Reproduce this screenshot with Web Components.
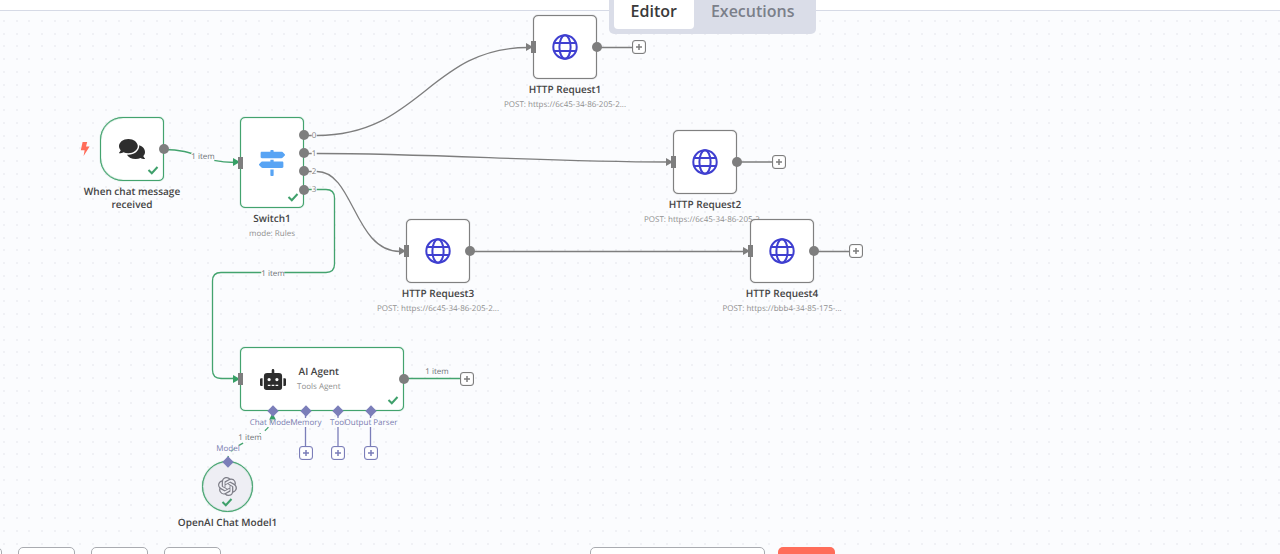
<!DOCTYPE html>
<html lang="en">
<head>
<meta charset="utf-8">
<meta name="viewport" content="width=device-width, initial-scale=1">
<title>Workflow editor</title>
<style>
  html, body { margin: 0; height: 100%; }
  body { font-family: "Open Sans", "Noto Sans", sans-serif; text-rendering: geometricPrecision; overflow: hidden; background: #fbfcfe; }
</style>
</head>
<body>
<wf-app></wf-app>

<script>
const ICONS = {
  comments: '<svg viewBox="0 0 576 512" width="26" height="24" fill="#2d2d2d"><path d="M416 192c0-88.4-93.1-160-208-160S0 103.6 0 192c0 34.3 14.1 65.9 38 92-13.4 30.2-35.5 54.2-35.8 54.5-2.2 2.3-2.8 5.7-1.5 8.7S4.8 352 8 352c36.6 0 66.9-12.3 88.7-25 32.2 15.7 70.3 25 111.3 25 114.9 0 208-71.6 208-160zm122 220c23.9-26 38-57.7 38-92 0-66.9-53.5-124.2-129.3-148.1.9 6.6 1.3 13.3 1.3 20.1 0 105.9-107.7 192-240 192-10.8 0-21.3-.8-31.7-1.9C207.8 439.6 281.8 480 368 480c41 0 79.1-9.2 111.3-25 21.8 12.7 52.1 25 88.7 25 3.2 0 6.1-1.9 7.3-4.8 1.3-2.9.7-6.3-1.5-8.7-.3-.3-22.4-24.2-35.8-54.5z"/></svg>',
  signs: '<svg viewBox="0 0 512 512" width="26" height="26" fill="#58a4f4"><path d="M507.31 84.69L464 41.37c-6-6-14.14-9.37-22.63-9.37H288V16c0-8.84-7.16-16-16-16h-32c-8.84 0-16 7.16-16 16v16H56c-13.25 0-24 10.75-24 24v80c0 13.25 10.75 24 24 24h385.37c8.49 0 16.62-3.37 22.63-9.37l43.31-43.31c6.25-6.26 6.25-16.38 0-22.63zM224 496c0 8.84 7.16 16 16 16h32c8.84 0 16-7.16 16-16V384h-64v112zm232-272H288v-32h-64v32H70.63c-8.49 0-16.62 3.37-22.63 9.37L4.69 276.69c-6.25 6.25-6.25 16.38 0 22.63L48 342.63c6 6 14.14 9.37 22.63 9.37H456c13.25 0 24-10.75 24-24v-80c0-13.25-10.75-24-24-24z"/></svg>',
  globe: '<svg viewBox="0 0 26 26" width="26" height="26" fill="none" stroke="#3f3fd0" stroke-width="2"><circle cx="13" cy="13" r="11.7"/><ellipse cx="13" cy="13" rx="5.6" ry="11.7"/><path d="M2 9h22M2 17h22"/></svg>',
  robot: '<svg viewBox="0 0 640 512" width="26" height="21" fill="#2d2d2d"><path d="M32,224H64V416H32A32,32,0,0,1,0,384V256A32,32,0,0,1,32,224Zm512-48V448a64,64,0,0,1-64,64H160a64,64,0,0,1-64-64V176a80,80,0,0,1,80-80H288V32a32,32,0,0,1,64,0V96H464A80,80,0,0,1,544,176ZM264,256a40,40,0,1,0-40,40A40,40,0,0,0,264,256Zm-8,128H192v32h64Zm96,0H288v32h64ZM456,256a40,40,0,1,0-40,40A40,40,0,0,0,456,256Zm-8,128H384v32h64ZM640,256V384a32,32,0,0,1-32,32H576V224h32A32,32,0,0,1,640,256Z"/></svg>',
  openai: '<svg viewBox="0 0 24 24" width="19" height="19" fill="#7d7d87"><path d="M22.2819 9.8211a5.9847 5.9847 0 0 0-.5157-4.9108 6.0462 6.0462 0 0 0-6.5098-2.9A6.0651 6.0651 0 0 0 4.9807 4.1818a5.9847 5.9847 0 0 0-3.9977 2.9 6.0462 6.0462 0 0 0 .7427 7.0966 5.98 5.98 0 0 0 .511 4.9107 6.051 6.051 0 0 0 6.5146 2.9001A5.9847 5.9847 0 0 0 13.2599 24a6.0557 6.0557 0 0 0 5.7718-4.2058 5.9894 5.9894 0 0 0 3.9977-2.9001 6.0557 6.0557 0 0 0-.7475-7.0729zm-9.022 12.6081a4.4755 4.4755 0 0 1-2.8764-1.0408l.1419-.0804 4.7783-2.7582a.7948.7948 0 0 0 .3927-.6813v-6.7369l2.02 1.1686a.071.071 0 0 1 .038.052v5.5826a4.504 4.504 0 0 1-4.4945 4.4944zm-9.6607-4.1254a4.4708 4.4708 0 0 1-.5346-3.0137l.142.0852 4.783 2.7582a.7712.7712 0 0 0 .7806 0l5.8428-3.3685v2.3324a.0804.0804 0 0 1-.0332.0615L9.74 19.9502a4.4992 4.4992 0 0 1-6.1408-1.6464zM2.3408 7.8956a4.485 4.485 0 0 1 2.3655-1.9728V11.6a.7664.7664 0 0 0 .3879.6765l5.8144 3.3543-2.0201 1.1685a.0757.0757 0 0 1-.071 0l-4.8303-2.7865A4.504 4.504 0 0 1 2.3408 7.872zm16.5963 3.8558L13.1038 8.364 15.1192 7.2a.0757.0757 0 0 1 .071 0l4.8303 2.7913a4.4944 4.4944 0 0 1-.6765 8.1042v-5.6772a.79.79 0 0 0-.407-.667zm2.0107-3.0231l-.142-.0852-4.7735-2.7818a.7759.7759 0 0 0-.7854 0L9.409 9.2297V6.8974a.0662.0662 0 0 1 .0284-.0615l4.8303-2.7866a4.4992 4.4992 0 0 1 6.6802 4.66zM8.3065 12.863l-2.02-1.1638a.0804.0804 0 0 1-.038-.0567V6.0742a4.4992 4.4992 0 0 1 7.3757-3.4537l-.142.0805L8.704 5.459a.7948.7948 0 0 0-.3927.6813zm1.0976-2.3654l2.602-1.4998 2.6069 1.4998v2.9994l-2.5974 1.4997-2.6067-1.4997Z"/></svg>'
};

class WfElement extends HTMLElement {
  constructor() {
    super();
    this.attachShadow({ mode: 'open' });
  }
  connectedCallback() {
    for (const name of ['x', 'y', 'w', 'h']) {
      if (this.hasAttribute(name)) this.style.setProperty('--' + name, this.getAttribute(name) + 'px');
    }
    this.shadowRoot.innerHTML = this.render();
  }
}

/* A node: its box is placed on the canvas by its top left corner (x, y) and size (w, h). */
customElements.define('wf-node', class extends WfElement {
  render() {
    const icon = ICONS[this.getAttribute('icon')];
    const outs = (this.getAttribute('outputs') || '').split(' ').filter(Boolean);
    const ports = (this.getAttribute('ports') || '').split(' ').filter(Boolean);
    return `
    <style>
      :host { position: absolute; left: var(--x); top: var(--y); width: var(--w, 64px);
        display: flex; flex-direction: column; align-items: center; --line: #808080; }
      :host([done]) { --line: #43a36e; }
      .box { position: relative; box-sizing: border-box; width: var(--w, 64px); height: var(--h, 64px);
        display: flex; align-items: center; justify-content: center; gap: 11px;
        background: #fff; border: 1px solid var(--line); border-radius: 5px; box-shadow: 0 0 1px var(--line), inset 0 0 1px var(--line); }
      :host([kind=trigger]) .box { border-radius: 23px 5px 5px 23px; }
      :host([kind=model]) .box { border-radius: 50%; background: #eeeef4; }
      :host([kind=agent]) .box { justify-content: flex-start; padding-left: 19px; }
      svg { display: block; flex: none; }
      .check { position: absolute; right: 4px; bottom: 5px; }
      :host([kind=model]) .check { right: 19px; bottom: 4px; }
      .in { position: absolute; left: -3px; top: 50%; margin-top: -6px; width: 5px; height: 12px; background: #7e7e7e; }
      .out { position: absolute; right: -6px; width: 10px; height: 10px; margin-top: -5px; border-radius: 50%; background: #7e7e7e; }
      .port { position: absolute; width: 8px; height: 8px; margin: -4px; background: #7b7eb9; transform: rotate(45deg); }
      .bolt { position: absolute; left: -21px; top: 24px; }
      .text { display: flex; flex-direction: column; align-items: center; }
      .text.below { margin-top: 4px; width: max-content; max-width: 130px; }
      ::slotted([slot=name]) { font-size: 10px; line-height: 13px; font-weight: 600; color: #444; text-align: center; }
      ::slotted([slot=sub]) { font-size: 8px; line-height: 13px; margin-top: 2px; color: #8f8f8f; white-space: nowrap; }
    </style>
    <div class="box">
      ${icon}
      ${this.getAttribute('kind') === 'agent' ? '<div class="text"><slot name="name"></slot><slot name="sub"></slot></div>' : ''}
      ${this.getAttribute('kind') === 'trigger' ? '<svg class="bolt" viewBox="0 0 10 14" width="10" height="14"><path d="M2.600 0h4.600L6 4.600h3.600L3.600 14l1-5.800H.8z" fill="#ff6d5a"/></svg>' : ''}
      ${this.hasAttribute('done') ? '<svg class="check" viewBox="0 0 12 10" width="12" height="10" fill="none" stroke="#3fa06b" stroke-width="2"><path d="M1.500 5L4.800 8.200 10.500 2"/></svg>' : ''}
      ${this.hasAttribute('input') ? '<span class="in"></span>' : ''}
      ${outs.map(y => `<span class="out" style="top:${y}px"></span>`).join('')}
      ${ports.map(p => `<span class="port" style="left:${p.split(',')[0]}px;top:${p.split(',')[1]}px"></span>`).join('')}
    </div>
    ${this.getAttribute('kind') === 'agent' ? '' : '<div class="text below"><slot name="name"></slot><slot name="sub"></slot></div>'}`;
  }
});

/* Small caption centred on a point of the canvas. */
customElements.define('wf-label', class extends WfElement {
  render() {
    return `
    <style>
      :host { position: absolute; left: var(--x); top: var(--y); transform: translate(-50%, -50%);
        font-size: 8px; line-height: 8px; color: #6f7278; background: #fbfcfe; white-space: nowrap; }
      :host([kind=port]) { color: #7a7cb0; background: rgba(251, 252, 254, .5); }
      :host([kind=index]) { color: #808080; }
    </style><slot></slot>`;
  }
});

customElements.define('wf-plus', class extends WfElement {
  render() {
    return `
    <style>
      :host { position: absolute; left: var(--x); top: var(--y); width: 14px; height: 14px; margin: -7px; --c: #7e7e7e; }
      :host([kind=port]) { --c: #7b7eb9; }
      button { display: block; box-sizing: border-box; width: 14px; height: 14px; padding: 0; margin: 0;
        border: 1px solid var(--c); border-radius: 3px; background: #fff; box-shadow: inset 0 0 1px var(--c); }
      svg { display: block; margin: 0 auto; }
    </style>
    <button type="button" aria-label="Add node"><svg viewBox="0 0 12 12" width="12" height="12"><path d="M6 3v6M3 6h6" stroke="var(--c)" stroke-width="1.500"/></svg></button>`;
  }
});

customElements.define('wf-edges', class extends WfElement {
  render() {
    const dots = [4, 17, 29, 42].flatMap(x => [8, 21, 34, 46].map(y => `<circle cx="${x}" cy="${y}" r="1"/>`)).join('');
    const arrow = (x, y, c) => `<path d="M${x - 7} ${y - 4}L${x} ${y}L${x - 7} ${y + 4}Z" fill="${c}" stroke="none"/>`;
    return `
    <style>:host { position: absolute; inset: 0; } svg { display: block; width: 100%; height: 100%; }</style>
    <svg fill="none" stroke-width="1.300">
      <defs><pattern id="dots" width="51" height="51" patternUnits="userSpaceOnUse"><g fill="#eceef2">${dots}</g></pattern></defs>
      <rect width="100%" height="100%" fill="url(#dots)"/>
      <g stroke="#7e7e7e">
        <path d="M304 135.500H317C420 135.500 430 47.500 528 47.500"/>
        <path d="M304 153.500H317C440 153.500 540 162 668 162"/>
        <path d="M304 171.500H317C354 171.500 354 251.500 400 251.500"/>
        <path d="M470 251.500H745M597 47.500H633M737 162H773M814 251.500H850"/>
        ${arrow(533, 47, '#7e7e7e')}${arrow(673, 162, '#7e7e7e')}${arrow(406, 251, '#7e7e7e')}${arrow(750, 251, '#7e7e7e')}
      </g>
      <g stroke="#43a36e">
        <path d="M164 149.500C198 149.500 200 162.500 235 162.500"/>
        <path d="M304 189.500H326Q334.500 189.500 334.500 198V264Q334.500 272.500 326 272.500H221Q212.500 272.500 212.500 281V370Q212.500 378.500 221 378.500H235"/>
        <path d="M403 378.500H460"/>
        <path d="M227.500 461C227.500 440 272.500 440 272.500 416" stroke-dasharray="5 5"/>
        ${arrow(240, 162, '#35a066')}${arrow(240, 379, '#35a066')}
        <path d="M269 420L272.500 413L276 420Z" fill="#35a066" stroke="none"/>
      </g>
      <path stroke="#7b7eb9" d="M305.500 411V418M305.500 427V447M338 411V418M338 427V447M370.500 411V418M370.500 427V447"/>
    </svg>`;
  }
});

customElements.define('wf-tabs', class extends WfElement {
  render() {
    return `
    <style>
      :host { display: flex; padding: 5px; border-radius: 5px; background: #dadde8; }
      ::slotted(button) { height: 35px; padding: 0 17px; border: 0; border-radius: 4px; background: transparent;
        font: 600 16px/35px "Open Sans", "Noto Sans", sans-serif; color: #7b7f8a; }
      ::slotted(button[aria-selected=true]) { background: #fff; color: #3a3a3a; }
    </style><slot></slot>`;
  }
});

customElements.define('wf-app', class extends WfElement {
  render() {
    const http = (n, x, y, sub) => `<wf-node x="${x}" y="${y}" icon="globe" input outputs="31"><span slot="name">HTTP Request${n}</span><span slot="sub">${sub}</span></wf-node>`;
    return `
    <style>
      :host { display: flex; flex-direction: column; height: 100vh; position: relative; overflow: hidden; background: #fbfcfe; }
      header { flex: none; height: 10px; background: #fff; border-bottom: 1px solid #d6dae6; z-index: 1; }
      main { flex: 1; position: relative; }
      .plane { position: absolute; inset: -11px 0 0; }
      .tabs { position: absolute; z-index: 2; top: -11px; left: 145px; right: 0; display: flex; justify-content: center; }
      footer { position: absolute; z-index: 2; left: 0; right: 0; bottom: 0; height: 7px; overflow: hidden; }
      .zoom { display: flex; gap: 16px; margin-left: -55px; }
      .run { position: absolute; top: 0; left: 145px; right: 0; display: flex; gap: 13px; justify-content: center; }
      footer button { box-sizing: border-box; width: 57px; height: 40px; flex: none; padding: 0; border: 1px solid #a9abb0; border-radius: 5px; background: #fff; }
      footer .chat { width: 175px; }
      footer .stop { border: 0; background: #ff6d5a; }
    </style>
    <header></header>
    <main><div class="plane">
      <wf-edges></wf-edges>
      <wf-label x="203" y="157">1 item</wf-label>
      <wf-label x="273" y="274">1 item</wf-label>
      <wf-label x="437" y="372">1 item</wf-label>
      <wf-label x="250" y="438">1 item</wf-label>
      <wf-label kind="index" x="314" y="136">0</wf-label>
      <wf-label kind="index" x="314" y="154">1</wf-label>
      <wf-label kind="index" x="314" y="172">2</wf-label>
      <wf-label kind="index" x="314" y="190">3</wf-label>
      <wf-label kind="port" x="271" y="423">Chat Model</wf-label>
      <wf-label kind="port" x="306" y="423">Memory</wf-label>
      <wf-label kind="port" x="338" y="423">Tool</wf-label>
      <wf-label kind="port" x="371" y="423">Output Parser</wf-label>
      <wf-label kind="port" x="228" y="449">Model</wf-label>
      <wf-node x="100" y="117" kind="trigger" icon="comments" done outputs="31"><span slot="name">When chat message<br>received</span></wf-node>
      <wf-node x="240" y="117" h="91" icon="signs" done input outputs="17 35 53 72"><span slot="name">Switch1</span><span slot="sub">mode: Rules</span></wf-node>
      ${http(1, 533, 15, 'POST: https://6c45-34-86-205-2...')}
      ${http(2, 673, 130, 'POST: https://6c45-34-86-205-2...')}
      ${http(3, 406, 219, 'POST: https://6c45-34-86-205-2...')}
      ${http(4, 750, 219, 'POST: https://bbb4-34-85-175-...')}
      <wf-node x="240" y="347" w="164" kind="agent" icon="robot" done input outputs="31" ports="32,63 65,63 97,63 130,63"><span slot="name">AI Agent</span><span slot="sub">Tools Agent</span></wf-node>
      <wf-node x="202" y="461" w="51" h="51" kind="model" icon="openai" done ports="25,0"><span slot="name">OpenAI Chat Model1</span></wf-node>
      <wf-plus x="639" y="47"></wf-plus>
      <wf-plus x="779" y="162"></wf-plus>
      <wf-plus x="856" y="251"></wf-plus>
      <wf-plus x="467" y="379"></wf-plus>
      <wf-plus kind="port" x="306" y="453"></wf-plus>
      <wf-plus kind="port" x="338" y="453"></wf-plus>
      <wf-plus kind="port" x="371" y="453"></wf-plus>
    </div></main>
    <div class="tabs"><wf-tabs role="tablist">
      <button type="button" role="tab" aria-selected="true">Editor</button>
      <button type="button" role="tab" aria-selected="false">Executions</button>
    </wf-tabs></div>
    <footer>
      <div class="zoom">
        <button type="button" aria-label="Fit view"></button>
        <button type="button" aria-label="Zoom in"></button>
        <button type="button" aria-label="Zoom out"></button>
        <button type="button" aria-label="Reset zoom"></button>
      </div>
      <div class="run">
        <button type="button" class="chat" aria-label="Open chat"></button>
        <button type="button" class="stop" aria-label="Clear execution"></button>
      </div>
    </footer>`;
  }
});
</script>
</body>
</html>
